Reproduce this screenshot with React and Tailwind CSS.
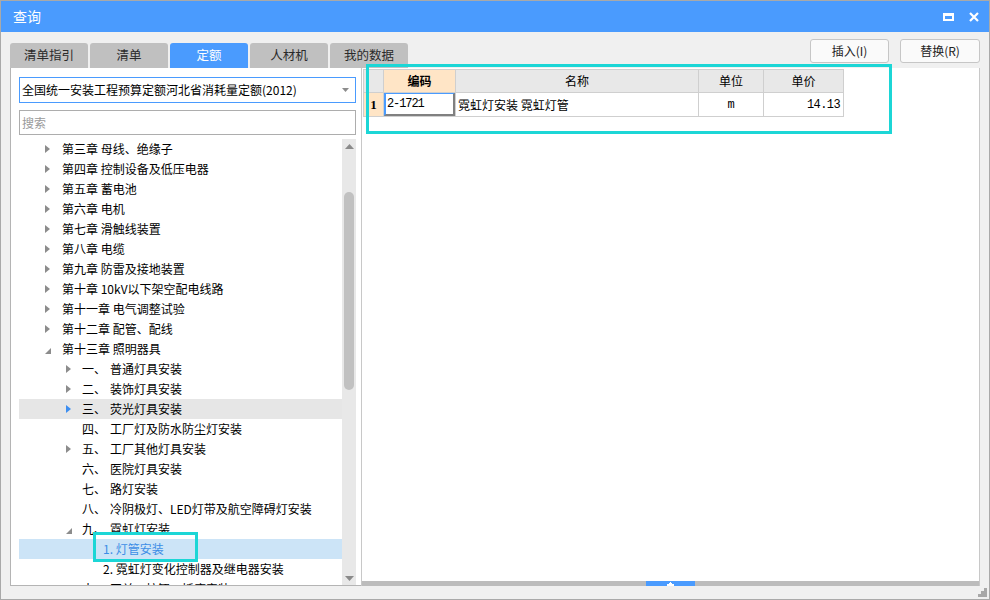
import React from 'react';

const tabs = ['清单指引', '清单', '定额', '人材机', '我的数据'];

const tree = [
  { lv: 1, text: '第三章 母线、绝缘子', arrow: 'r' },
  { lv: 1, text: '第四章 控制设备及低压电器', arrow: 'r' },
  { lv: 1, text: '第五章 蓄电池', arrow: 'r' },
  { lv: 1, text: '第六章 电机', arrow: 'r' },
  { lv: 1, text: '第七章 滑触线装置', arrow: 'r' },
  { lv: 1, text: '第八章 电缆', arrow: 'r' },
  { lv: 1, text: '第九章 防雷及接地装置', arrow: 'r' },
  { lv: 1, text: '第十章 10kV以下架空配电线路', arrow: 'r' },
  { lv: 1, text: '第十一章 电气调整试验', arrow: 'r' },
  { lv: 1, text: '第十二章 配管、配线', arrow: 'r' },
  { lv: 1, text: '第十三章 照明器具', arrow: 'd' },
  { lv: 2, no: '一、', text: '普通灯具安装', arrow: 'r' },
  { lv: 2, no: '二、', text: '装饰灯具安装', arrow: 'r' },
  { lv: 2, no: '三、', text: '荧光灯具安装', arrow: 'r', hover: true },
  { lv: 2, no: '四、', text: '工厂灯及防水防尘灯安装' },
  { lv: 2, no: '五、', text: '工厂其他灯具安装', arrow: 'r' },
  { lv: 2, no: '六、', text: '医院灯具安装' },
  { lv: 2, no: '七、', text: '路灯安装' },
  { lv: 2, no: '八、', text: '冷阴极灯、LED灯带及航空障碍灯安装' },
  { lv: 2, no: '九、', text: '霓虹灯安装', arrow: 'd' },
  { lv: 3, text: '1. 灯管安装', selected: true },
  { lv: 3, text: '2. 霓虹灯变化控制器及继电器安装' },
  { lv: 2, no: '十、', text: '开关、按钮、插座安装' },
];

const Arrow = ({ dir, color = '#8c8c8c' }) => {
  if (dir === 'd') {
    return (
      <svg width="6" height="6" viewBox="0 0 6 6" className="mt-[3px]">
        <polygon points="6,0 6,6 0,6" fill={color} />
      </svg>
    );
  }
  return (
    <svg width="5" height="8" viewBox="0 0 5 8">
      <polygon points="0,0 5,4 0,8" fill={color} />
    </svg>
  );
};

const TreeRow = ({ item }) => {
  const bg = item.selected ? 'bg-[#cce4f7]' : item.hover ? 'bg-[#e6e6e6]' : '';
  const color = item.selected ? 'text-[#3d8ee6]' : 'text-black';
  if (item.lv === 1) {
    return (
      <div className={`flex items-center h-[20px] pl-[26px] whitespace-nowrap ${bg} ${color}`}>
        <div className="w-[17px] flex items-center">{item.arrow && <Arrow dir={item.arrow} />}</div>
        <span>{item.text}</span>
      </div>
    );
  }
  if (item.lv === 2) {
    return (
      <div className={`flex items-center h-[20px] pl-[47px] whitespace-nowrap ${bg} ${color}`}>
        <div className="w-[16px] flex items-center">
          {item.arrow && <Arrow dir={item.arrow} color={item.hover ? '#3d8ef0' : '#8c8c8c'} />}
        </div>
        <span className="w-[28px]">{item.no}</span>
        <span>{item.text}</span>
      </div>
    );
  }
  return (
    <div className={`flex items-center h-[20px] pl-[84px] whitespace-nowrap ${bg} ${color}`}>
      <span>{item.text}</span>
    </div>
  );
};

const App = () => {
  return (
    <div className="relative w-[990px] h-[600px] border border-[#a9a9a9] bg-[#f0f0f0] flex flex-col font-['Noto_Sans_CJK_SC',sans-serif] text-[12px] text-black overflow-hidden">
      {/* title bar */}
      <div className="h-[31px] bg-[#4a9bfe] flex items-center justify-between pl-[12px] pr-[10px] shrink-0">
        <span className="text-white text-[14px]">查询</span>
        <div className="flex items-center gap-[15px]">
          <div className="w-[11px] h-[8px] border-[2px] border-white border-t-[3px]"></div>
          <svg width="10" height="10" viewBox="0 0 10 10">
            <path d="M1 1 L9 9 M9 1 L1 9" stroke="white" strokeWidth="2.2" />
          </svg>
        </div>
      </div>

      {/* tabs + buttons */}
      <div className="h-[36px] flex justify-between pl-[9px] pr-[9px] shrink-0">
        <div className="flex items-end gap-[2px]">
          {tabs.map((t) => (
            <div
              key={t}
              className={`w-[78px] h-[25px] rounded-t-[3px] flex items-center justify-center text-[12.5px] ${t === '定额' ? 'bg-[#4a9bfe] text-white' : 'bg-[#c0c0c0] text-[#2a2a2a]'}`}
            >
              {t}
            </div>
          ))}
        </div>
        <div className="flex gap-[11px] pt-[7px]">
          <button className="w-[79px] h-[24px] border border-[#c6c6c6] rounded-[3px] bg-[#fafafa] text-[12px] text-[#222]">插入(I)</button>
          <button className="w-[80px] h-[24px] border border-[#c6c6c6] rounded-[3px] bg-[#fafafa] text-[12px] text-[#222]">替换(R)</button>
        </div>
      </div>

      {/* main */}
      <div className="h-[518px] flex pl-[9px] pr-[9px] shrink-0">
        {/* left panel */}
        <div className="w-[351px] h-[518px] bg-white border-l border-b border-[#b4b4b4] pl-[8px] pr-[5px] pt-[9px] flex flex-col">
          <div className="h-[26px] border border-[#4a9bfe] flex items-center justify-between pl-[2px] pr-[6px]">
            <span className="text-black whitespace-nowrap">全国统一安装工程预算定额河北省消耗量定额(2012)</span>
            <svg width="7" height="4" viewBox="0 0 7 4">
              <polygon points="0,0 7,0 3.5,4" fill="#8c8c8c" />
            </svg>
          </div>
          <div className="mt-[7px] h-[25px] border border-[#adadad] flex items-center pl-[2px] text-[#9a9a9a]">搜索</div>
          <div className="mt-[4px] flex-1 flex overflow-hidden">
            <div className="flex-1 overflow-hidden">
              {tree.map((item, i) => (
                <TreeRow key={i} item={item} />
              ))}
            </div>
            <div className="w-[14px] bg-[#e8e8e8] flex flex-col items-center">
              <svg width="9" height="5" viewBox="0 0 9 5" className="mt-[5px]">
                <polygon points="0,5 9,5 4.5,0" fill="#8a8a8a" />
              </svg>
              <div className="mt-[43px] w-[10px] h-[198px] rounded-full bg-[#c1c1c1]"></div>
              <div className="flex-1"></div>
              <svg width="9" height="5" viewBox="0 0 9 5" className="mb-[4px]">
                <polygon points="0,0 9,0 4.5,5" fill="#8a8a8a" />
              </svg>
            </div>
          </div>
        </div>

        {/* right panel */}
        <div className="flex-1 h-[518px] bg-white border-l border-r border-[#c8c8c8] flex flex-col">
          <div className="flex-1 pt-[1px] pl-[1px]">
            <table className="border-collapse text-[12px]">
              <tbody>
                <tr className="h-[23px] bg-[#e8e8e8]">
                  <td className="w-[20px] border border-[#cfcfcf]"></td>
                  <td className="w-[72px] border border-[#cfcfcf] bg-[#ffe5c6] text-center font-bold text-black">编码</td>
                  <td className="w-[243px] border border-[#cfcfcf] text-center">名称</td>
                  <td className="w-[65px] border border-[#cfcfcf] text-center">单位</td>
                  <td className="w-[80px] border border-[#cfcfcf] text-center">单价</td>
                </tr>
                <tr className="h-[23px]">
                  <td className="border border-[#cfcfcf] bg-[#ffe5c6] text-center font-bold font-['Liberation_Serif',serif] text-[13px]">1</td>
                  <td className="border border-[#cfcfcf] p-0">
                    <div className="h-[23px] border-l-2 border-t border-l-[#4a9bfe] border-t-[#4a9bfe] border-r-2 border-b-2 border-r-[#808080] border-b-[#808080] flex items-center pl-[1px] font-['Liberation_Mono',monospace] text-[12px] tracking-[-1.1px] text-black">
                      2-1721
                    </div>
                  </td>
                  <td className="border border-[#cfcfcf] pl-[2px] text-black">霓虹灯安装 霓虹灯管</td>
                  <td className="border border-[#cfcfcf] text-center font-['Liberation_Mono',monospace] text-[12px] text-black">m</td>
                  <td className="border border-[#cfcfcf] text-right pr-[3px] font-['Liberation_Mono',monospace] text-[12px] tracking-[-0.6px] text-black">14.13</td>
                </tr>
              </tbody>
            </table>
          </div>
          <div className="h-[5px] bg-[#bcbcbc] flex">
            <div className="w-[284px]"></div>
            <div className="w-[49px] bg-[#4a9bfe] flex items-center justify-center">
              <svg width="7" height="4" viewBox="0 0 7 4">
                <path d="M3 0 H4 V1 H5 V2 H7 V4 H0 V2 H2 V1 H3 Z" fill="white" />
              </svg>
            </div>
          </div>
        </div>
      </div>

      {/* bottom strip with resize grip */}
      <div className="flex-1 flex justify-end items-end pr-[2px] pb-[2px]">
        <svg width="9" height="9" viewBox="0 0 9 9">
          <rect x="6" y="0" width="3" height="3" fill="#a8a8a8" />
          <rect x="3" y="3" width="3" height="3" fill="#a8a8a8" />
          <rect x="6" y="3" width="3" height="3" fill="#a8a8a8" />
          <rect x="0" y="6" width="3" height="3" fill="#a8a8a8" />
          <rect x="3" y="6" width="3" height="3" fill="#a8a8a8" />
          <rect x="6" y="6" width="3" height="3" fill="#a8a8a8" />
        </svg>
      </div>

      {/* highlight boxes */}
      <div className="absolute left-[365px] top-[63px] w-[526px] h-[70px] border-[3px] border-[#1cd6d6] pointer-events-none"></div>
      <div className="absolute left-[92px] top-[531px] w-[105px] h-[30px] border-[3px] border-[#1cd6d6] pointer-events-none"></div>
    </div>
  );
};

export default App;
